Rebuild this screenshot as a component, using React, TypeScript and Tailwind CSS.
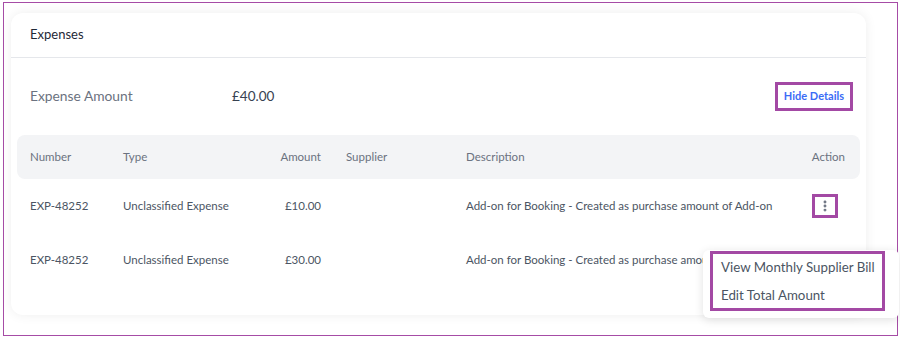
import { EllipsisVertical } from "lucide-react";

const rows = [
  { num: "EXP-48252", type: "Unclassified Expense", amount: "£10.00", supplier: "", desc: "Add-on for Booking - Created as purchase amount of Add-on" },
  { num: "EXP-48252", type: "Unclassified Expense", amount: "£30.00", supplier: "", desc: "Add-on for Booking - Created as purchase amount of Add-on" },
];

const cols = "grid grid-cols-[93px_128px_70px_145px_1fr_auto] items-center pl-[13px] pr-[15px]";

export default function App() {
  return (
    <div className="w-[900px] h-[339px] bg-white pt-[2px] pl-[3px]" style={{ fontFamily: "Lato, 'Open Sans', sans-serif" }}>
      <div className="relative w-[895px] h-[334px] border border-[#a64ca6] pl-[7px] pt-[10px]">
        {/* card */}
        <div className="w-[855px] h-[302px] rounded-xl bg-white shadow-[0_0_12px_rgba(0,0,0,0.07)] overflow-hidden">
          <div className="h-[45px] flex items-center pl-[19px] text-[13px] text-[#1f2937] border-b border-[#e5e7eb]">
            Expenses
          </div>
          <div className="h-[77px] flex items-center pl-[19px] pr-[13px]">
            <span className="w-[202px] text-[13.8px] text-[#6b7280]">Expense Amount</span>
            <span className="text-[13.5px] text-[#374151]">£40.00</span>
            <span className="ml-auto mb-[1px] border-[3px] border-[#a349a4] px-[6px] h-[29px] flex items-center text-[11px] font-bold text-[#3b6cf6]">
              Hide Details
            </span>
          </div>
          <div className="px-[6px]">
            <div className={`${cols} h-[44px] bg-[#f3f4f6] rounded-lg text-[11.5px] text-[#6b7280]`}>
              <span>Number</span>
              <span>Type</span>
              <span className="text-right">Amount</span>
              <span className="pl-[25px]">Supplier</span>
              <span>Description</span>
              <span>Action</span>
            </div>
            {rows.map((r, i) => (
              <div key={i} className={`${cols} h-[54px] text-[11.5px] text-[#4b5563]`}>
                <span>{r.num}</span>
                <span>{r.type}</span>
                <span className="text-right">{r.amount}</span>
                <span className="pl-[25px]">{r.supplier}</span>
                <span className="whitespace-nowrap">{r.desc}</span>
                <span className="w-[33px] flex justify-start">
                  {i === 0 && (
                    <span className="w-[26px] h-[24px] border-[3px] border-[#a349a4] flex items-center justify-center">
                      <EllipsisVertical size={14} strokeWidth={3} className="text-[#6b7280]" />
                    </span>
                  )}
                </span>
              </div>
            ))}
          </div>
        </div>
        {/* dropdown */}
        <div className="absolute left-[699px] top-[247px] w-[196px] h-[68px] bg-white rounded-md shadow-[0_2px_10px_rgba(0,0,0,0.12)] pl-[7px] pt-[1px]">
          <div className="w-[175px] h-[60px] border-[3px] border-[#a349a4] flex flex-col justify-center pl-[8px] gap-[12px] text-[13.3px] text-[#4b5563]">
            <span className="leading-[16px]">View Monthly Supplier Bill</span>
            <span className="leading-[16px]">Edit Total Amount</span>
          </div>
        </div>
      </div>
    </div>
  );
}
